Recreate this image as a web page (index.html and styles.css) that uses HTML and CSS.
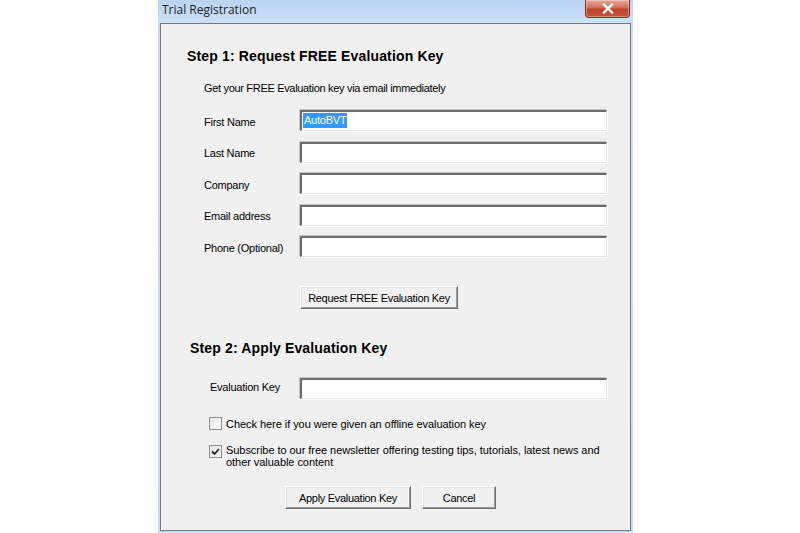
FILE: index.html
```html
<!DOCTYPE html>
<html lang="en">
<head>
<meta charset="UTF-8" />
<title>Trial Registration</title>
<link rel="stylesheet" href="styles.css">
</head>
<body>
  <div class="window">
    <div class="titlebar">
      <span class="title">Trial Registration</span>
      <button class="close" aria-label="Close">
        <svg width="14" height="11" viewBox="0 0 14 11"><path d="M3 1.5 L11 9.5 M11 1.5 L3 9.5" stroke="#fff" stroke-width="2.4" stroke-linecap="square"/></svg>
      </button>
    </div>

    <div class="client">
      <h2 class="step">Step 1: Request FREE Evaluation Key</h2>
      <p class="intro">Get your FREE Evaluation key via email immediately</p>

      <div class="fields">
        <label>First Name</label>
        <div class="edit"><span class="sel">AutoBVT</span></div>
        <label>Last Name</label>
        <div class="edit"></div>
        <label>Company</label>
        <div class="edit"></div>
        <label>Email address</label>
        <div class="edit"></div>
        <label>Phone (Optional)</label>
        <div class="edit"></div>
      </div>

      <div class="request">
        <button class="btn">Request FREE Evaluation Key</button>
      </div>

      <h2 class="step step2">Step 2: Apply Evaluation Key</h2>

      <div class="fields keyrow">
        <label>Evaluation Key</label>
        <div class="edit"></div>
      </div>

      <div class="check">
        <span class="box"></span>
        <span>Check here if you were given an offline evaluation key</span>
      </div>
      <div class="check two">
        <span class="box checked">
          <svg width="9" height="8" viewBox="0 0 9 8"><path d="M1 3.5 L3.5 6 L8 1" fill="none" stroke="#222" stroke-width="1.8"/></svg>
        </span>
        <span>Subscribe to our free newsletter offering testing tips, tutorials, latest news and other valuable content</span>
      </div>

      <div class="actions">
        <button class="btn apply">Apply Evaluation Key</button>
        <button class="btn cancel">Cancel</button>
      </div>
    </div>
  </div>
</body>
</html>
```

FILE: styles.css
```css
body {
  margin: 0;
  background: #ffffff;
  font-family: 'Liberation Sans', Arial, sans-serif;
  color: #000;
}
.window {
  margin-left: 158px;
  width: 475px;
  height: 533px;
  background: linear-gradient(#bcd6f3, #c9def6 30px, #c6dcf5);
  padding: 0 2px 2px 2px;
  box-sizing: border-box;
  display: flex;
  flex-direction: column;
}
.titlebar {
  height: 23px;
  display: flex;
  justify-content: space-between;
  align-items: flex-start;
  background: linear-gradient(#b9d3f1, #cde1f8);
  margin: 0 -2px;
  padding: 0 3px 0 4px;
}
.title {
  font-family: 'Open Sans', 'Liberation Sans', sans-serif;
  font-size: 12px;
  line-height: 20px;
  color: #1e1e1e;
}
.close {
  width: 45px;
  height: 18px;
  margin: 0;
  padding: 0;
  border: 1px solid #8a2a1e;
  border-top: none;
  border-radius: 0 0 4px 4px;
  background: linear-gradient(#e9a596, #d36f5b 45%, #c1402a 55%, #c9553d);
  display: flex;
  align-items: center;
  justify-content: center;
  box-shadow: inset 0 0 0 1px rgba(255,255,255,0.35);
}
.client {
  flex: 1;
  background: #f0f0f0;
  border: 1px solid #6e7b89;
  padding-top: 24px;
  font-size: 11px;
  letter-spacing: -0.25px;
}
.step {
  margin: 0 0 0 26px;
  font-size: 14px;
  line-height: 17px;
  font-weight: bold;
  letter-spacing: 0.15px;
}
.step2 {
  margin: 31px 0 0 29px;
}
.intro {
  margin: 17px 0 0 43px;
  line-height: 13px;
  letter-spacing: -0.32px;
}
.fields {
  margin: 15px 0 0 43px;
  display: grid;
  grid-template-columns: 96px 307px;
  row-gap: 10.5px;
  align-items: center;
}
.fields label {
  line-height: 13px;
  padding-top: 3px;
}
.edit {
  height: 21px;
  box-sizing: border-box;
  background: #fff;
  border-top: 2px solid #6d6d6d;
  border-left: 2px solid #6d6d6d;
  border-right: 1px solid #e3e3e3;
  border-bottom: 1px solid #e3e3e3;
  box-shadow: -1px -1px 0 #c4c4c4, 1px 1px 0 #fdfdfd;
  padding: 1px 0 0 1px;
}
.sel {
  display: inline-block;
  background: #3399ff;
  color: #fff;
  line-height: 15px;
  padding: 0 1px;
}
.request {
  margin: 29px 0 0 139px;
}
.btn {
  font-family: 'Liberation Sans', Arial, sans-serif;
  font-size: 11px;
  letter-spacing: -0.3px;
  height: 23px;
  padding: 0 7px;
  margin: 0;
  background: #f0f0f0;
  color: #000;
  border-top: 1px solid #ffffff;
  border-left: 1px solid #ffffff;
  border-right: 1px solid #6d6d6d;
  border-bottom: 1px solid #6d6d6d;
  box-shadow: inset -1px -1px 0 #a0a0a0, inset 1px 1px 0 #e3e3e3;
}
.request .btn {
  width: 158px;
}
.keyrow {
  margin: 21px 0 0 49px;
  grid-template-columns: 90px 307px;
}
.keyrow label {
  padding: 0 0 2px;
}
.check {
  margin: 18px 0 0 48px;
  display: flex;
  align-items: center;
  gap: 4px;
  line-height: 12px;
  width: 400px;
  letter-spacing: -0.05px;
}
.check.two {
  margin-top: 14px;
  align-items: flex-start;
}
.check.two .box {
  margin-top: 1px;
}
.box {
  flex: none;
  width: 11px;
  height: 11px;
  border: 1px solid #8f8f8f;
  background: linear-gradient(135deg, #e4e4e4, #fdfdfd);
  display: flex;
  align-items: center;
  justify-content: center;
}
.actions {
  margin: 18px 0 0 124px;
  display: flex;
  gap: 11px;
}
.apply {
  width: 126px;
}
.cancel {
  width: 74px;
}
```
